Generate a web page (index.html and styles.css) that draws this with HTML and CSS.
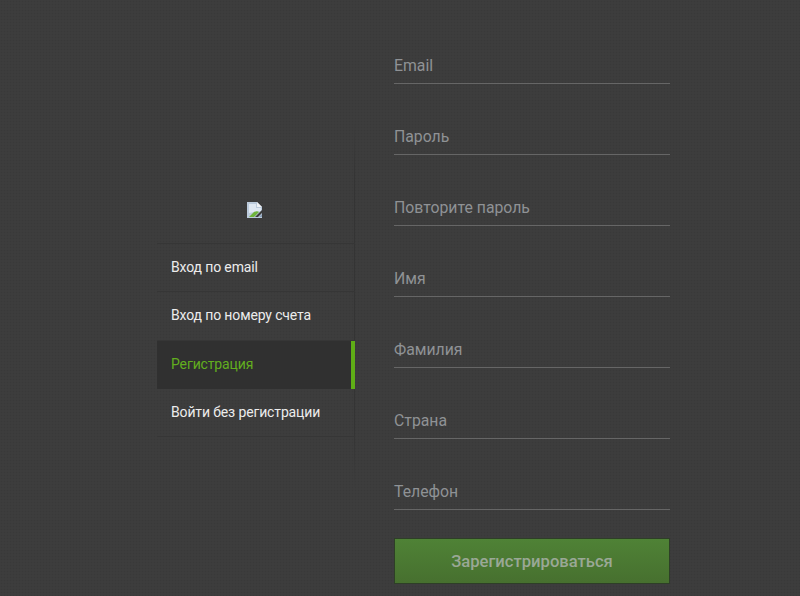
FILE: index.html
```html
<!DOCTYPE html>
<html lang="ru">
<head>
<meta charset="utf-8">
<title>Регистрация</title>
<link rel="stylesheet" href="styles.css">
</head>
<body>
<div class="page">
  <aside class="side">
    <div class="logo">
      <svg class="broken" width="16" height="16" viewBox="0 0 16 16" aria-hidden="true">
        <path d="M0 0H10L15 5V16H0Z" fill="#bccbdc"/>
        <path d="M10 0L15 5H10Z" fill="#f0f2f5"/>
        <path d="M2 2H9V6H14V9L2 11Z" fill="#dfe8f2"/>
        <path d="M2 15L7 10C9 9 11 9 12 10L7 15Z" fill="#6eb43a"/>
        <path d="M8 15L15 8V11L11 15Z" fill="#3d3d3d"/>
        <path d="M12 15L15 12V15Z" fill="#8aa0b8"/>
      </svg>
    </div>
    <nav class="menu">
      <a class="item">Вход по email</a>
      <a class="item">Вход по номеру счета</a>
      <a class="item active">Регистрация</a>
      <a class="item">Войти без регистрации</a>
    </nav>
  </aside>
  <form class="form">
    <div class="field">Email</div>
    <div class="field">Пароль</div>
    <div class="field">Повторите пароль</div>
    <div class="field">Имя</div>
    <div class="field">Фамилия</div>
    <div class="field">Страна</div>
    <div class="field">Телефон</div>
    <div class="submit">Зарегистрироваться</div>
  </form>
</div>
</body>
</html>
```
FILE: styles.css
```css
* { box-sizing: border-box; }
html, body { margin: 0; height: 100%; }
body {
  background-color: #3d3d3d;
  background-image: radial-gradient(rgba(0,0,0,.06) 0.7px, transparent 1.1px);
  background-size: 3px 3px;
  font-family: Roboto, "Liberation Sans", sans-serif;
  overflow: hidden;
}
.page {
  display: flex;
  height: 596px;
  padding-left: 156px;
}
.side {
  width: 199px;
  height: 596px;
  padding-top: 125px;
  margin-right: 39px;
  border-right: 1px solid transparent;
  border-image: linear-gradient(to bottom, rgba(0,0,0,0) 120px, rgba(0,0,0,.14) 180px, rgba(0,0,0,.14) 430px, rgba(0,0,0,0) 490px) 1;
}
.logo {
  display: flex;
  justify-content: center;
  height: 118px;
  padding-top: 77px;
}
.broken { display: block; }
.menu {
  display: flex;
  flex-direction: column;
  margin-left: 1px;
  margin-right: -1px;
  border-top: 1px solid #363636;
}
.item {
  display: flex;
  align-items: center;
  height: 48.3px;
  padding-left: 14px;
  padding-bottom: 2px;
  font-size: 14px;
  letter-spacing: -.14px;
  color: #ececec;
  border-bottom: 1px solid #363636;
}
.item.active {
  color: #62ae1e;
  background: #303030;
  border-bottom: 0;
  border-right: 4px solid #5fae16;
}
.form {
  display: flex;
  flex-direction: column;
  width: 276px;
  padding-top: 13px;
}
.field {
  display: flex;
  flex-direction: column;
  justify-content: flex-end;
  height: 71px;
  padding-bottom: 8px;
  font-size: 15.8px;
  line-height: 19px;
  color: #8f9295;
  border-bottom: 1px solid #666;
}
.submit {
  display: flex;
  align-items: center;
  justify-content: center;
  height: 46px;
  margin-top: 28px;
  background: linear-gradient(#4f8236, #47702f);
  border: 1px solid #2e3f27;
  font-size: 16.6px;
  font-weight: 500;
  color: #9aa896;
}
```
